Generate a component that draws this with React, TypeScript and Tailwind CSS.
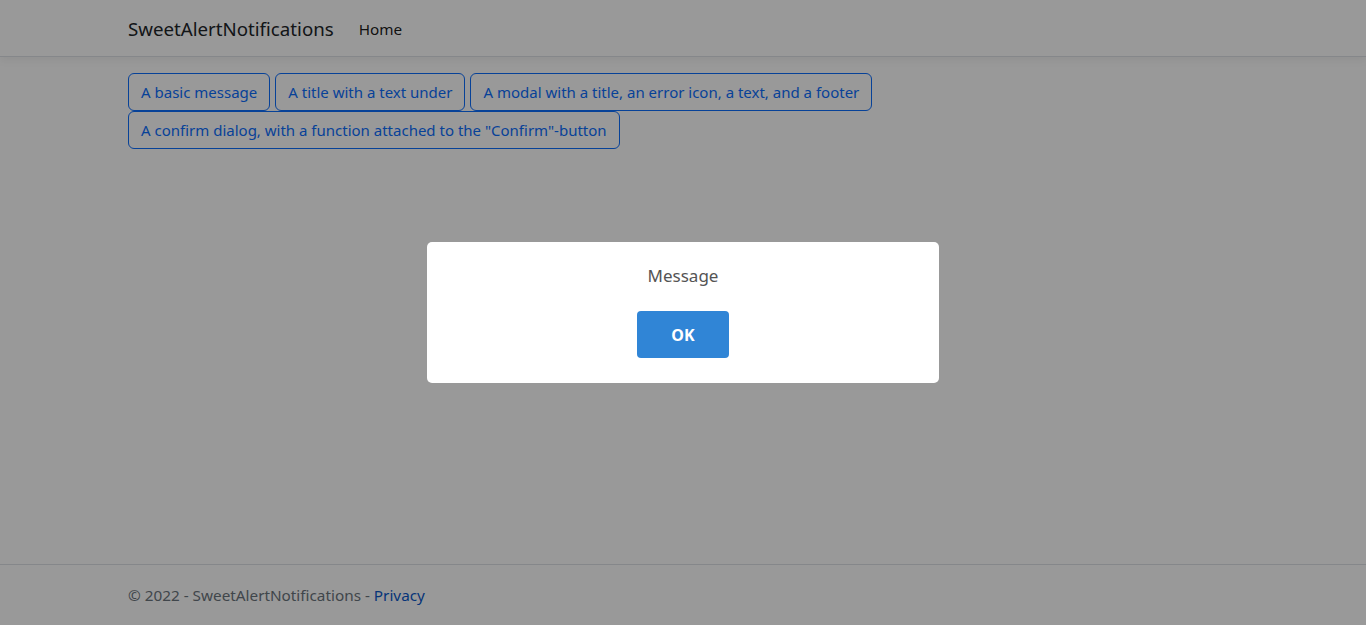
import React from 'react';

const font = "font-['Segoe_UI','Noto_Sans','Liberation_Sans',sans-serif]";

export default function App() {
  const demos = [
    'A basic message',
    'A title with a text under',
    'A modal with a title, an error icon, a text, and a footer',
    'A confirm dialog, with a function attached to the "Confirm"-button',
  ];

  return (
    <div className={`${font} relative min-h-screen flex flex-col bg-white text-[#212529]`}>
      {/* Navbar */}
      <header className="h-[57px] border-b border-[#dee2e6] shadow-[0_4px_8px_rgba(0,0,0,0.05)] bg-white">
        <div className="w-[1134px] mx-auto px-3 h-full flex items-center pt-[2px]">
          <span className="text-[18.7px] mr-[17px] leading-[30px]">SweetAlertNotifications</span>
          <a className="text-[15.3px] px-2 text-black/90">Home</a>
        </div>
      </header>

      {/* Content */}
      <main className="flex-1">
        <div className="w-[1134px] mx-auto px-3 pt-4">
          <div className="flex flex-wrap gap-x-[5px]">
            {demos.map((d) => (
              <button
                key={d}
                className="h-[38px] px-3 border border-[#0d6efd] text-[#0d6efd] rounded-[6px] text-[15px] leading-6 whitespace-nowrap"
              >
                {d}
              </button>
            ))}
          </div>
        </div>
      </main>

      {/* Footer */}
      <footer className="h-[61px] border-t border-[#dee2e6] text-[#6c757d]">
        <div className="w-[1134px] mx-auto px-3 h-full flex items-center text-[15.3px]">
          <span>
            © 2022 - SweetAlertNotifications - <a className="text-[#0a58ca]">Privacy</a>
          </span>
        </div>
      </footer>

      {/* SweetAlert backdrop + popup */}
      <div className="fixed inset-0 bg-black/40 flex items-center justify-center">
        <div className="w-[512px] h-[141px] bg-white rounded-[5px] flex flex-col items-center">
          <p className="mt-[20px] text-[17px] leading-[27px] text-[#545454]">Message</p>
          <button className="mt-[22px] w-[92px] h-[47px] bg-[#3085d6] text-white font-bold text-[16px] rounded-[4px]">
            OK
          </button>
        </div>
      </div>
    </div>
  );
}
